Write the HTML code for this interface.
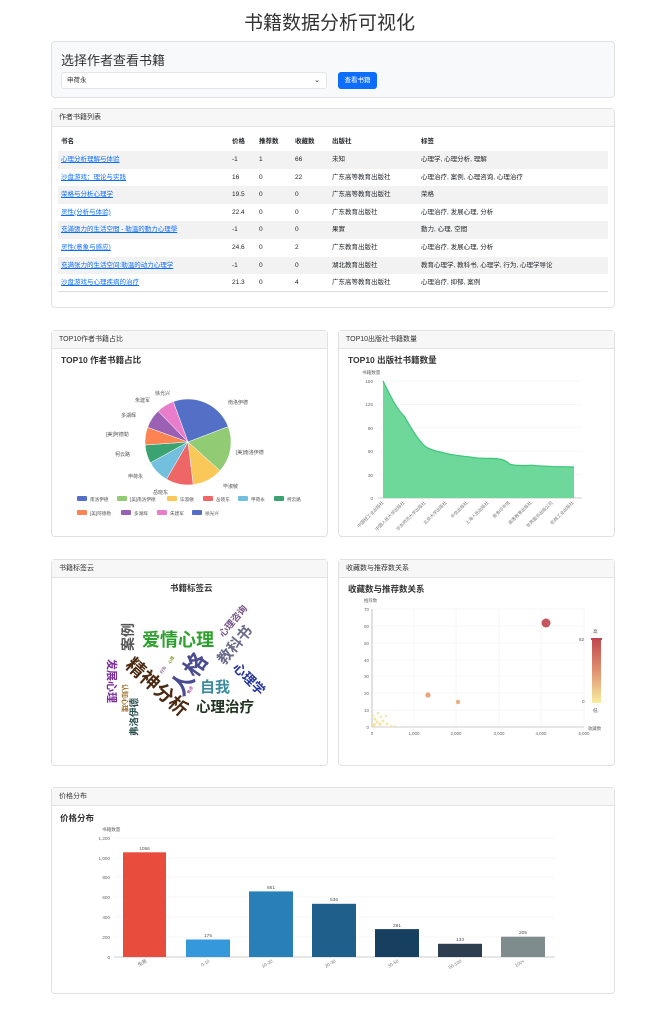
<!DOCTYPE html>
<html><head><meta charset="utf-8"><style>
*{box-sizing:border-box;margin:0;padding:0}
body{width:659px;height:1024px;background:#fff;font-family:"Liberation Sans","Noto Sans CJK SC",sans-serif;color:#212529;position:relative;overflow:hidden}
.a{position:absolute}
.card{position:absolute;border:1px solid #dfe1e4;border-radius:4px;background:#fff}
.hd{position:absolute;left:0;right:0;top:0;height:18px;background:#f7f7f7;border-bottom:1px solid #e3e3e3;font-size:7px;line-height:18px;padding-left:7px;color:#333}
.row{position:absolute;left:58px;width:550px;height:17.6px;font-size:6.5px;line-height:17.6px}
.row span{position:absolute}
.row .n{left:3px;color:#0d6efd;text-decoration:underline}
svg text{font-family:"Liberation Sans","Noto Sans CJK SC",sans-serif}
</style></head><body>
<div class="a" style="left:0;width:659px;top:8px;text-align:center;font-size:19px;color:#333">书籍数据分析可视化</div>

<div class="card" style="left:51px;top:41px;width:564px;height:57px;background:#f8f9fa"></div>
<div class="a" style="left:61px;top:50px;font-size:13px;color:#333">选择作者查看书籍</div>
<div class="a" style="left:61px;top:72px;width:266px;height:17px;background:#fff;border:1px solid #e3e5e8;border-radius:3px;font-size:6.5px;line-height:16px;padding-left:5px;color:#333">申荷永<span style="position:absolute;right:6px;top:0;font-size:7px">⌄</span></div>
<div class="a" style="left:338px;top:72px;width:39px;height:17px;background:#0d6efd;border-radius:3px;color:#fff;font-size:6.5px;line-height:17px;text-align:center">查看书籍</div>

<div class="card" style="left:51px;top:108px;width:564px;height:200px"><div class="hd">作者书籍列表</div></div>
<div class="row" style="top:133px;font-weight:bold"><span style="left:3px">书名</span><span style="left:174px">价格</span><span style="left:201px">推荐数</span><span style="left:237px">收藏数</span><span style="left:274px">出版社</span><span style="left:363px">标签</span></div>
<div class="row" style="top:151px;background:#f2f2f2"><span class="n">心理分析理解与体验</span><span style="left:174px">-1</span><span style="left:201px">1</span><span style="left:237px">66</span><span style="left:274px">未知</span><span style="left:363px">心理学, 心理分析, 理解</span></div>
<div class="row" style="top:168.6px"><span class="n">沙盘游戏：理论与实践</span><span style="left:174px">16</span><span style="left:201px">0</span><span style="left:237px">22</span><span style="left:274px">广东高等教育出版社</span><span style="left:363px">心理治疗, 案例, 心理咨询, 心理治疗</span></div>
<div class="row" style="top:186.2px;background:#f2f2f2"><span class="n">荣格与分析心理学</span><span style="left:174px">19.5</span><span style="left:201px">0</span><span style="left:237px">0</span><span style="left:274px">广东高等教育出版社</span><span style="left:363px">荣格</span></div>
<div class="row" style="top:203.8px"><span class="n">灵性(分析与体验)</span><span style="left:174px">22.4</span><span style="left:201px">0</span><span style="left:237px">0</span><span style="left:274px">广东教育出版社</span><span style="left:363px">心理治疗, 发展心理, 分析</span></div>
<div class="row" style="top:221.4px;background:#f2f2f2"><span class="n">充滿張力的生活空間 - 勒溫的動力心理學</span><span style="left:174px">-1</span><span style="left:201px">0</span><span style="left:237px">0</span><span style="left:274px">果實</span><span style="left:363px">動力, 心理, 空間</span></div>
<div class="row" style="top:239px"><span class="n">灵性(意象与感应)</span><span style="left:174px">24.6</span><span style="left:201px">0</span><span style="left:237px">2</span><span style="left:274px">广东教育出版社</span><span style="left:363px">心理治疗, 发展心理, 分析</span></div>
<div class="row" style="top:256.6px;background:#f2f2f2"><span class="n">充满张力的生活空间:勒温的动力心理学</span><span style="left:174px">-1</span><span style="left:201px">0</span><span style="left:237px">0</span><span style="left:274px">湖北教育出版社</span><span style="left:363px">教育心理学, 教科书, 心理学, 行为, 心理学导论</span></div>
<div class="row" style="top:274.2px;border-bottom:1px solid #ddd"><span class="n">沙盘游戏与心理疾病的治疗</span><span style="left:174px">21.3</span><span style="left:201px">0</span><span style="left:237px">4</span><span style="left:274px">广东高等教育出版社</span><span style="left:363px">心理治疗, 抑郁, 案例</span></div>

<div class="card" style="left:51px;top:330px;width:277px;height:207px"><div class="hd">TOP10作者书籍占比</div></div>
<div class="card" style="left:338px;top:330px;width:277px;height:207px"><div class="hd">TOP10出版社书籍数量</div></div>
<div class="card" style="left:51px;top:559px;width:277px;height:207px"><div class="hd">书籍标签云</div></div>
<div class="card" style="left:338px;top:559px;width:277px;height:207px"><div class="hd">收藏数与推荐数关系</div></div>
<div class="card" style="left:51px;top:787px;width:564px;height:207px"><div class="hd">价格分布</div></div>

<svg class="a" style="left:0;top:0" width="659" height="1024" viewBox="0 0 659 1024">
<g font-size="8.5" font-weight="bold" fill="#333">
<text x="61" y="363">TOP10 作者书籍占比</text>
<text x="348" y="363">TOP10 出版社书籍数量</text>
<text x="170" y="591">书籍标签云</text>
<text x="348" y="592">收藏数与推荐数关系</text>
<text x="60" y="821">价格分布</text>
</g>
<g stroke="#fff" stroke-width="0.5">
<path d="M188 442L173.3 401.6A43 43 0 0 1 228.2 426.6Z" fill="#5470c6"/>
<path d="M188 442L228.2 426.6A43 43 0 0 1 220 470.8Z" fill="#91cc75"/>
<path d="M188 442L220 470.8A43 43 0 0 1 193.2 484.7Z" fill="#fac858"/>
<path d="M188 442L193.2 484.7A43 43 0 0 1 166.5 479.2Z" fill="#ee6666"/>
<path d="M188 442L166.5 479.2A43 43 0 0 1 150.4 462.8Z" fill="#73c0de"/>
<path d="M188 442L150.4 462.8A43 43 0 0 1 145.1 445Z" fill="#3ba272"/>
<path d="M188 442L145.1 445A43 43 0 0 1 147.6 427.3Z" fill="#fc8452"/>
<path d="M188 442L147.6 427.3A43 43 0 0 1 158.1 411.1Z" fill="#9a60b4"/>
<path d="M188 442L158.1 411.1A43 43 0 0 1 173.3 401.6Z" fill="#ea7ccc"/>
</g>
<g font-size="5" fill="#555">
<text x="228" y="404">南洛伊德</text><text x="236" y="454">[美]南洛伊德</text><text x="223" y="488">毕淑敏</text>
<text x="153" y="494">岳晓东</text><text x="128" y="478">申荷永</text><text x="115" y="456">柯云路</text>
<text x="106" y="436">[美]阿德勒</text><text x="121" y="417">多湖辉</text><text x="135" y="402">朱建军</text><text x="155" y="395">徐光兴</text>
</g>
<g font-size="4.6" fill="#555">
<rect x="77" y="496" width="10" height="5" rx="1" fill="#5470c6"/><text x="90" y="501">南洛伊德</text>
<rect x="117" y="496" width="10" height="5" rx="1" fill="#91cc75"/><text x="130" y="501">[美]南洛伊德</text>
<rect x="167" y="496" width="10" height="5" rx="1" fill="#fac858"/><text x="180" y="501">毕淑敏</text>
<rect x="203" y="496" width="10" height="5" rx="1" fill="#ee6666"/><text x="216" y="501">岳晓东</text>
<rect x="238" y="496" width="10" height="5" rx="1" fill="#73c0de"/><text x="251" y="501">申荷永</text>
<rect x="274" y="496" width="10" height="5" rx="1" fill="#3ba272"/><text x="287" y="501">柯云路</text>
<rect x="77" y="510" width="10" height="5" rx="1" fill="#fc8452"/><text x="90" y="515">[美]阿德勒</text>
<rect x="121" y="510" width="10" height="5" rx="1" fill="#9a60b4"/><text x="134" y="515">多湖辉</text>
<rect x="157" y="510" width="10" height="5" rx="1" fill="#ea7ccc"/><text x="170" y="515">朱建军</text>
<rect x="192" y="510" width="10" height="5" rx="1" fill="#5470c6"/><text x="205" y="515">徐光兴</text>
</g>
<g stroke="#eee" stroke-width="0.5"><line x1="378" y1="381" x2="582" y2="381"/><line x1="378" y1="404.4" x2="582" y2="404.4"/><line x1="378" y1="427.8" x2="582" y2="427.8"/><line x1="378" y1="451.2" x2="582" y2="451.2"/><line x1="378" y1="474.6" x2="582" y2="474.6"/></g>
<line x1="378" y1="498" x2="582" y2="498" stroke="#999" stroke-width="0.6"/>
<path d="M383 381C390 395 397 410 404.2 416.1C411 428 418 440 425.4 446.6C432 451 440 451.7 446.7 453.6C453 455 460 456 467.9 456.7C475 458 482 458.5 489.1 458.3C496 458.5 503 458 510.3 464.5C517 466 524 465.6 531.6 465.2C538 466 545 466 552.8 466.6L574 467V498H383Z" fill="#6dd899"/>
<path d="M383 381C390 395 397 410 404.2 416.1C411 428 418 440 425.4 446.6C432 451 440 451.7 446.7 453.6C453 455 460 456 467.9 456.7C475 458 482 458.5 489.1 458.3C496 458.5 503 458 510.3 464.5C517 466 524 465.6 531.6 465.2C538 466 545 466 552.8 466.6L574 467" fill="none" stroke="#3cc579" stroke-width="1.2"/>
<g font-size="4.6" fill="#666" text-anchor="end"><text x="373" y="383">150</text><text x="373" y="406">120</text><text x="373" y="430">90</text><text x="373" y="453">60</text><text x="373" y="477">30</text><text x="373" y="500">0</text></g>
<text x="362" y="374" font-size="4.6" fill="#666">书籍数量</text>
<g font-size="4.4" fill="#777" text-anchor="end">
<text transform="translate(384,503) rotate(-45)">中国轻工业出版社</text><text transform="translate(405,503) rotate(-45)">中国人民大学出版社</text><text transform="translate(426,503) rotate(-45)">华东师范大学出版社</text><text transform="translate(447,503) rotate(-45)">北京大学出版社</text><text transform="translate(468,503) rotate(-45)">中信出版社</text><text transform="translate(489,503) rotate(-45)">上海人民出版社</text><text transform="translate(510,503) rotate(-45)">商务印书馆</text><text transform="translate(532,503) rotate(-45)">高等教育出版社</text><text transform="translate(553,503) rotate(-45)">世界图书出版公司</text><text transform="translate(574,503) rotate(-45)">机械工业出版社</text>
</g>
<!-- word cloud -->
<g font-weight="bold" text-anchor="middle">
<text x="178" y="646" font-size="18" fill="#2ca02c">爱情心理</text>
<text transform="translate(189,674) rotate(-55)" font-size="23" fill="#4a4a8f" dy="8">人格</text>
<text transform="translate(157,687) rotate(42)" font-size="19" fill="#4b2a12" dy="6.5">精神分析</text>
<text x="225" y="712" font-size="14.5" fill="#223322">心理治疗</text>
<text x="215" y="692" font-size="15" fill="#3a8aa0">自我</text>
<text transform="translate(235,645) rotate(-50)" font-size="15" fill="#6a6a8a" dy="5">教科书</text>
<text transform="translate(233,621) rotate(-50)" font-size="9.5" fill="#775588" dy="3.3">心理咨询</text>
<text transform="translate(249,679) rotate(45)" font-size="13" fill="#223399" dy="4.5">心理学</text>
<text transform="translate(128,637) rotate(-90)" font-size="14" fill="#555" dy="5">案例</text>
<text transform="translate(112,681) rotate(90)" font-size="11" fill="#7a2d9a" dy="4">发展心理</text>
<text transform="translate(134,717) rotate(-90)" font-size="9.5" fill="#2e5050" dy="3.3">弗洛伊德</text>
<text transform="translate(125,698) rotate(90)" font-size="7" fill="#a0702a" dy="2.4">认知心理</text>
<text transform="translate(163,670) rotate(-60)" font-size="4" fill="#885588" dy="1.4">行为</text>
<text transform="translate(190,690) rotate(-60)" font-size="4" fill="#aa5599" dy="1.4">焦虑</text>
<text transform="translate(171,660) rotate(-60)" font-size="4" fill="#889922" dy="1.4">心理</text>
</g>
<g stroke="#eee" stroke-width="0.5">
<line x1="372" y1="609" x2="584" y2="609"/><line x1="372" y1="626" x2="584" y2="626"/><line x1="372" y1="643" x2="584" y2="643"/><line x1="372" y1="660" x2="584" y2="660"/><line x1="372" y1="676" x2="584" y2="676"/><line x1="372" y1="693" x2="584" y2="693"/><line x1="372" y1="710" x2="584" y2="710"/>
<line x1="414" y1="609" x2="414" y2="727"/><line x1="456" y1="609" x2="456" y2="727"/><line x1="499" y1="609" x2="499" y2="727"/><line x1="541" y1="609" x2="541" y2="727"/><line x1="584" y1="609" x2="584" y2="727"/>
</g>
<line x1="372" y1="727" x2="584" y2="727" stroke="#999" stroke-width="0.6"/>
<line x1="372" y1="609" x2="372" y2="727" stroke="#999" stroke-width="0.6"/>
<g font-size="4.4" fill="#666" text-anchor="end"><text x="369" y="611">70</text><text x="369" y="628">60</text><text x="369" y="645">50</text><text x="369" y="662">40</text><text x="369" y="678">30</text><text x="369" y="695">20</text><text x="369" y="712">10</text><text x="369" y="729">0</text></g>
<g font-size="4.4" fill="#666" text-anchor="middle"><text x="372" y="735">0</text><text x="414" y="735">1,000</text><text x="456" y="735">2,000</text><text x="499" y="735">3,000</text><text x="541" y="735">4,000</text><text x="584" y="735">5,000</text></g>
<text x="364" y="602" font-size="4.4" fill="#666">推荐数</text>
<text x="588" y="730" font-size="4.4" fill="#666">收藏数</text>
<circle cx="546" cy="623" r="4.5" fill="#c6565e"/>
<circle cx="428" cy="695" r="2.6" fill="#e9a47e"/>
<circle cx="458" cy="702" r="2.2" fill="#eab084"/>
<g fill="#f3e3a0" opacity="0.9">
<circle cx="374" cy="725" r="2"/><circle cx="377" cy="722" r="1.6"/><circle cx="380" cy="724" r="1.8"/><circle cx="375" cy="719" r="1.5"/><circle cx="383" cy="721" r="1.4"/><circle cx="378" cy="713" r="1.3"/><circle cx="386" cy="716" r="1.2"/><circle cx="387" cy="724" r="1.5"/><circle cx="391" cy="726" r="1.2"/><circle cx="373" cy="716" r="1.2"/><circle cx="381" cy="717" r="1.3"/><circle cx="395" cy="726" r="1"/>
</g>
<defs><linearGradient id="g" x1="0" y1="0" x2="0" y2="1"><stop offset="0" stop-color="#c0474f"/><stop offset="0.5" stop-color="#e0906f"/><stop offset="1" stop-color="#f8eea0"/></linearGradient></defs>
<rect x="592" y="638" width="9" height="65" fill="url(#g)"/>
<rect x="591" y="638" width="11" height="2" fill="#c0474f"/>
<g font-size="4.6" fill="#555"><text x="593" y="633">高</text><text x="593" y="712">低</text><text x="579" y="641">62</text><text x="582" y="703">0</text></g>
<g stroke="#eee" stroke-width="0.5"><line x1="114" y1="838" x2="555" y2="838"/><line x1="114" y1="858" x2="555" y2="858"/><line x1="114" y1="877" x2="555" y2="877"/><line x1="114" y1="897" x2="555" y2="897"/><line x1="114" y1="917" x2="555" y2="917"/><line x1="114" y1="937" x2="555" y2="937"/></g>
<line x1="114" y1="957" x2="555" y2="957" stroke="#999" stroke-width="0.6"/>
<g font-size="4.6" fill="#666" text-anchor="end"><text x="110" y="840">1,200</text><text x="110" y="860">1,000</text><text x="110" y="879">800</text><text x="110" y="899">600</text><text x="110" y="919">400</text><text x="110" y="939">200</text><text x="110" y="959">0</text></g>
<text x="102" y="831" font-size="4.6" fill="#666">书籍数量</text>
<rect x="123" y="852.3" width="43" height="104.7" fill="#e74c3c"/>
<rect x="186" y="939.5" width="44" height="17.5" fill="#3498db"/>
<rect x="249" y="891.4" width="44" height="65.6" fill="#2980b9"/>
<rect x="312" y="903.8" width="44" height="53.2" fill="#1f5f8b"/>
<rect x="375" y="929.1" width="44" height="27.9" fill="#173f5f"/>
<rect x="438" y="943.8" width="44" height="13.2" fill="#2c3e50"/>
<rect x="501" y="936.7" width="44" height="20.3" fill="#7f8c8d"/>
<g font-size="4.8" fill="#555" text-anchor="middle"><text x="144.5" y="850">1056</text><text x="208" y="937">176</text><text x="271" y="889">661</text><text x="334" y="901">536</text><text x="397" y="927">281</text><text x="460" y="941">133</text><text x="523" y="934">205</text></g>
<g font-size="4.6" fill="#777" text-anchor="end">
<text transform="translate(147,962) rotate(-30)">免费</text><text transform="translate(210,962) rotate(-30)">0-10</text><text transform="translate(273,962) rotate(-30)">10-20</text><text transform="translate(336,962) rotate(-30)">20-30</text><text transform="translate(399,962) rotate(-30)">30-50</text><text transform="translate(462,962) rotate(-30)">50-100</text><text transform="translate(525,962) rotate(-30)">100+</text>
</g>
</svg>
</body></html>
